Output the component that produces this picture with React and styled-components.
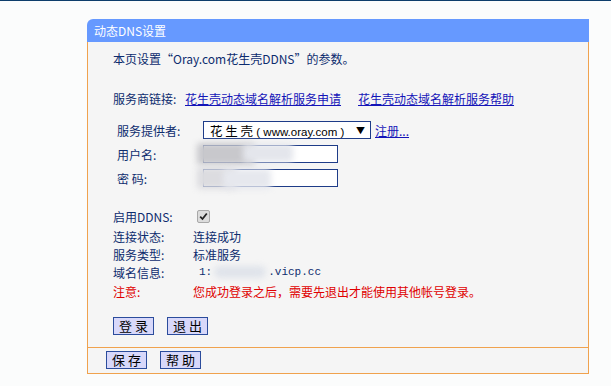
import React from "react";
import styled, { createGlobalStyle } from "styled-components";

const Global = createGlobalStyle`
  html, body { margin: 0; padding: 0; }
  body {
    background: #fbfcfc;
    font-family: "Noto Sans CJK SC", "Liberation Sans", sans-serif;
    font-size: 12px;
    border-top: 1px solid #0d3d6b;
    height: 385px;
    overflow: hidden;
  }
`;

const Frame = styled.div`
  margin: 18px 0 0 87px;
  width: 502px;
`;

const Header = styled.div`
  height: 23px;
  line-height: 23px;
  background: #6699ff;
  color: #fff;
  padding-left: 7px;
  border-top-left-radius: 6px;
  font-size: 12px;
`;

const Section = styled.div`
  background: #f5f5f5;
  border-left: 1px solid #f0a24e;
  border-right: 1px solid #f0a24e;
  border-bottom: 1px solid #f0a24e;
  padding: ${(p) => p.$pad};
`;

const Line = styled.div`
  display: flex;
  align-items: center;
  height: ${(p) => p.$h || 16}px;
  margin-top: ${(p) => p.$mt || 0}px;
  padding-left: ${(p) => p.$indent || 0}px;
  color: ${(p) => (p.$red ? "#e00000" : "#0d2c6e")};
  white-space: nowrap;
`;

const Label = styled.span`
  display: inline-block;
  width: ${(p) => p.$w}px;
  flex: none;
`;

const Link = styled.a`
  color: #1414b8;
  text-decoration: underline;
  margin-right: ${(p) => p.$mr || 0}px;
  cursor: pointer;
`;

const Select = styled.div`
  box-sizing: border-box;
  width: 168px;
  height: 18px;
  border: 1px solid #1e3c88;
  background: #fff;
  display: flex;
  align-items: center;
  justify-content: space-between;
  padding: 0 5px 0 6px;
  color: #000;
  font-size: 12.5px;
  margin-right: 4px;
`;

const Latin = styled.span`
  font-family: "Liberation Sans", sans-serif;
  font-size: 11.5px;
`;

const Arrow = styled.span`
  font-size: 9px;
  color: #000;
`;

const InputWrap = styled.div`
  position: relative;
  width: 135px;
  height: 18px;
`;

const Input = styled.div`
  box-sizing: border-box;
  width: 135px;
  height: 18px;
  border: 1px solid #1e3c88;
  background: #fff;
`;

const Blur = styled.div`
  position: absolute;
  left: ${(p) => p.$l}px;
  top: ${(p) => p.$t}px;
  width: ${(p) => p.$w}px;
  height: ${(p) => p.$h}px;
  background: ${(p) => p.$c};
  filter: blur(3px);
  border-radius: 4px;
`;

const Check = styled.span`
  display: inline-flex;
  align-items: center;
  justify-content: center;
  width: 11px;
  height: 11px;
  margin-left: 4px;
  background: #dcdcdc;
  border: 1px solid #a8a8a8;
  border-radius: 2px;
`;

const Domain = styled.span`
  display: inline-flex;
  align-items: center;
  margin-left: 6px;
  font-family: "Liberation Mono", monospace;
  font-size: 11px;
  color: #0d2c6e;
`;

const Hidden = styled.span`
  display: inline-block;
  width: 52px;
  height: 12px;
  margin: 0 2px;
  background: #dfe3ea;
  filter: blur(3px);
  border-radius: 6px;
`;

const Buttons = styled.div`
  display: flex;
  gap: 13px;
  margin-top: ${(p) => p.$mt || 0}px;
`;

const Button = styled.button`
  box-sizing: border-box;
  width: 41px;
  height: 18px;
  padding: 0;
  background: #d8d8fa;
  border: 1px solid #2b4c9c;
  color: #000;
  font-family: "Noto Sans CJK SC", sans-serif;
  font-size: 13px;
  line-height: 16px;
  letter-spacing: 3px;
  text-indent: 3px;
`;

export default function App() {
  return (
    <>
      <Global />
      <Frame>
        <Header>动态DNS设置</Header>
        <Section $pad="8px 0 12px 25px">
          <Line>本页设置“Oray.com花生壳DDNS”的参数。</Line>
          <Line $mt={24}>
            <Label $w={72}>服务商链接:</Label>
            <Link $mr={17}>花生壳动态域名解析服务申请</Link>
            <Link>花生壳动态域名解析服务帮助</Link>
          </Line>
          <Line $mt={15} $h={18} $indent={4}>
            <Label $w={86}>服务提供者:</Label>
            <Select>
              <span>
                花 生 壳<Latin> ( www.oray.com )</Latin>
              </span>
              <Arrow>▼</Arrow>
            </Select>
            <Link>注册...</Link>
          </Line>
          <Line $mt={6} $h={18} $indent={4}>
            <Label $w={86}>用户名:</Label>
            <InputWrap>
              <Input />
              <Blur $l={-6} $t={-2} $w={58} $h={22} $c="#c8c8cc" />
              <Blur $l={40} $t={-1} $w={50} $h={18} $c="#e4e6ec" />
            </InputWrap>
          </Line>
          <Line $mt={6} $h={18} $indent={4}>
            <Label $w={86}>密 码:</Label>
            <InputWrap>
              <Input />
              <Blur $l={-6} $t={-2} $w={40} $h={22} $c="#dcdce0" />
              <Blur $l={20} $t={0} $w={48} $h={20} $c="#e6e8ee" />
            </InputWrap>
          </Line>
          <Line $mt={20} $h={18}>
            <Label $w={80}>启用DDNS:</Label>
            <Check>
              <svg width="9" height="9" viewBox="0 0 9 9">
                <path d="M1.2 4.6 L3.5 7 L7.8 1.5" stroke="#222" strokeWidth="1.8" fill="none" />
              </svg>
            </Check>
          </Line>
          <Line $mt={2} $h={18}>
            <Label $w={80}>连接状态:</Label>
            连接成功
          </Line>
          <Line $h={18}>
            <Label $w={80}>服务类型:</Label>
            标准服务
          </Line>
          <Line $h={18}>
            <Label $w={80}>域名信息:</Label>
            <Domain>
              1:<Hidden />.vicp.cc
            </Domain>
          </Line>
          <Line $mt={1} $h={18} $red>
            <Label $w={80}>注意:</Label>
            您成功登录之后，需要先退出才能使用其他帐号登录。
          </Line>
          <Buttons $mt={17}>
            <Button>登录</Button>
            <Button>退出</Button>
          </Buttons>
        </Section>
        <Section $pad="3px 0 4px 18px">
          <Buttons>
            <Button>保存</Button>
            <Button>帮助</Button>
          </Buttons>
        </Section>
      </Frame>
    </>
  );
}
